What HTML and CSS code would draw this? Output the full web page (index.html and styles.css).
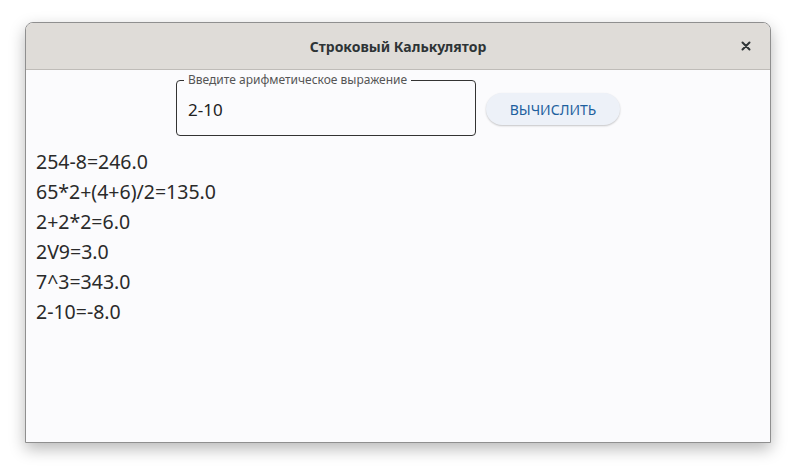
FILE: index.html
```html
<!DOCTYPE html>
<html lang="ru">
<head>
<meta charset="utf-8">
<link rel="stylesheet" href="styles.css">
</head>
<body>
<div class="window">
  <div class="titlebar">
    <span class="title">Строковый Калькулятор</span>
    <span class="close">
      <svg width="10" height="10" viewBox="0 0 10 10"><path d="M1.5 1.5 L8.5 8.5 M8.5 1.5 L1.5 8.5" stroke="#2e3436" stroke-width="2" stroke-linecap="round"/></svg>
    </span>
  </div>
  <div class="content">
    <div class="form">
      <div class="field">
        <span class="label">Введите арифметическое выражение</span>
        <span class="value">2-10</span>
      </div>
      <button class="btn">ВЫЧИСЛИТЬ</button>
    </div>
    <div class="results">
      <div class="line">254-8=246.0</div>
      <div class="line">65*2+(4+6)/2=135.0</div>
      <div class="line">2+2*2=6.0</div>
      <div class="line">2V9=3.0</div>
      <div class="line">7^3=343.0</div>
      <div class="line">2-10=-8.0</div>
    </div>
  </div>
</div>
</body>
</html>
```
FILE: styles.css
```css
html, body {
  margin: 0;
  padding: 0;
  background: #ffffff;
  width: 796px;
  height: 472px;
  overflow: hidden;
  font-family: "Noto Sans", "Open Sans", sans-serif;
}
.window {
  margin: 22px 0 0 25px;
  width: 746px;
  height: 421px;
  box-sizing: border-box;
  border: 1px solid #8f8f8f;
  border-radius: 8px 8px 0 0;
  background: #fbfbfd;
  box-shadow: 0 6px 16px rgba(0,0,0,0.28);
  display: flex;
  flex-direction: column;
  overflow: hidden;
}
.titlebar {
  height: 46px;
  flex: none;
  background: #dfdcd8;
  border-bottom: 1px solid #bfbcb8;
  display: flex;
  align-items: center;
  justify-content: center;
  position: relative;
}
.title {
  font-size: 14px;
  font-weight: bold;
  color: #2e3436;
}
.close {
  position: absolute;
  right: 19px;
  top: 18px;
  width: 10px;
  height: 10px;
  display: flex;
}
.content {
  padding: 10px 0 0 10px;
}
.form {
  display: flex;
  align-items: center;
  gap: 10px;
  margin-left: 140px;
}
.field {
  position: relative;
  width: 300px;
  height: 56px;
  box-sizing: border-box;
  border: 1px solid #333333;
  border-radius: 4px;
  display: flex;
  align-items: center;
  padding-left: 11px;
}
.label {
  position: absolute;
  left: 7px;
  top: -8px;
  padding: 0 4px;
  background: #fbfbfd;
  font-size: 12px;
  line-height: 14px;
  color: #555555;
}
.value {
  font-size: 17px;
  color: #222222;
  margin-top: 3px;
}
.btn {
  width: 134px;
  height: 32px;
  border: none;
  border-radius: 16px;
  background: #edf1f8;
  box-shadow: 0 1px 2px rgba(0,0,0,0.22);
  color: #1d5f9e;
  font-family: "Noto Sans", "Open Sans", sans-serif;
  font-size: 14px;
  padding: 0;
  margin-top: 2px;
}
.results {
  margin-top: 11px;
}
.line {
  font-size: 19.5px;
  line-height: 30px;
  color: #2a2a2a;
}
```
